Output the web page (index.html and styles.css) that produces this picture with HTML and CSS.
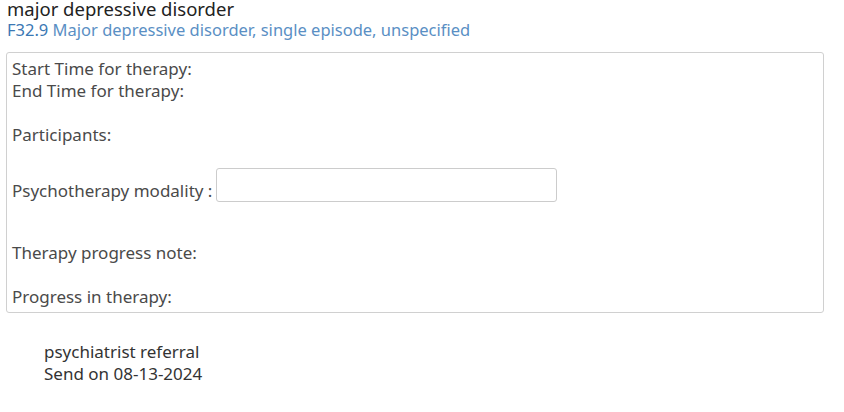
FILE: index.html
```html
<!DOCTYPE html>
<html>
<head>
<meta charset="utf-8">
<link rel="stylesheet" href="styles.css">
</head>
<body>
<div class="page">
  <div class="title">major depressive disorder</div>
  <div class="code"><span class="code-id">F32.9</span> Major depressive disorder, single episode, unspecified</div>
  <div class="panel">
    <div class="line">Start Time for therapy:</div>
    <div class="line">End Time for therapy:</div>
    <div class="line gap">Participants:</div>
    <div class="modality"><span class="line">Psychotherapy modality :</span><input class="field" type="text"></div>
    <div class="line note">Therapy progress note:</div>
    <div class="line gap">Progress in therapy:</div>
  </div>
  <div class="referral">
    <div class="ref-name">psychiatrist referral</div>
    <div class="ref-date">Send on 08-13-2024</div>
  </div>
</div>
</body>
</html>
```
FILE: styles.css
```css
html, body {
  margin: 0;
  padding: 0;
  background: #fff;
}
.page {
  font-family: "Noto Sans", "Open Sans", sans-serif;
  color: #333;
  padding: 0 20px 0 6px;
}
.title {
  font-size: 18.5px;
  line-height: 17px;
  color: #222;
  padding-left: 1px;
}
.code {
  font-size: 16.5px;
  line-height: 20px;
  color: #5a8fc4;
  padding-left: 1px;
  margin-top: 3px;
}
.code-id {
  color: #3b78b4;
}
.panel {
  margin-top: 12px;
  border: 1px solid #d0d0d0;
  border-radius: 3px;
  padding: 5px 5px 4px;
  font-size: 17px;
  line-height: 22px;
  color: #4a4a4a;
}
.gap { margin-top: 22px; }
.modality {
  margin-top: 22px;
  display: flex;
  align-items: flex-end;
  gap: 4px;
}
.field {
  width: 341px;
  height: 34px;
  border: 1px solid #ccc;
  border-radius: 3px;
  margin: 0;
  padding: 0 6px;
  box-sizing: border-box;
  background: #fff;
}
.note { margin-top: 40px; }
.referral {
  margin-top: 28px;
  padding-left: 38px;
  font-size: 17px;
  line-height: 22px;
  color: #333;
}
```
